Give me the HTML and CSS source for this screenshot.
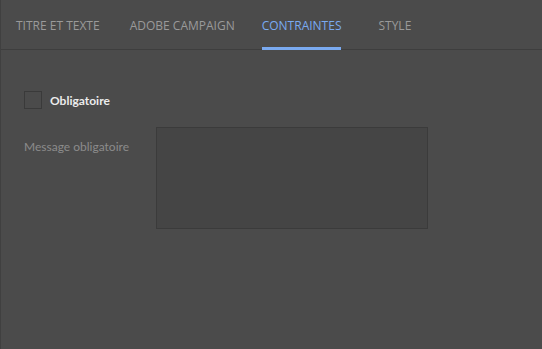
FILE: index.html
```html
<!DOCTYPE html>
<html lang="fr">
<head>
  <meta charset="UTF-8">
  <title>Contraintes</title>
  <link rel="stylesheet" href="styles.css">
</head>
<body>

<div class="panel">
  <div class="tabs">
    <div class="tab">TITRE ET TEXTE</div>
    <div class="tab">ADOBE CAMPAIGN</div>
    <div class="tab active">CONTRAINTES</div>
    <div class="tab">STYLE</div>
  </div>

  <!-- Contraintes -->
  <div class="content">
    <label class="check-row">
      <span class="checkbox"></span>
      <span class="check-label">Obligatoire</span>
    </label>

    <div class="field-row">
      <div class="field-label">Message obligatoire</div>
      <textarea class="field-input"></textarea>
    </div>
  </div>
</div>

</body>
</html>
```

FILE: styles.css
```css
html, body {
  margin: 0;
  height: 100%;
}

body {
  font-family: Lato, 'Open Sans', sans-serif;
  background: #4b4b4b;
}

.panel {
  height: 100%;
  border-left: 1px solid #404040;
  box-sizing: border-box;
}

.tabs {
  display: flex;
  height: 50px;
  padding-left: 15px;
  border-bottom: 1px solid #3e3e3e;
  box-sizing: border-box;
}

.tab {
  position: relative;
  font-family: 'Open Sans', sans-serif;
  font-size: 12px;
  color: #9a9a9a;
  line-height: 50px;
  padding-top: 1px;
  margin-right: 30px;
}

.tab.active {
  color: #7aaaf0;
}

.tab.active::after {
  content: '';
  position: absolute;
  left: 0;
  right: 0;
  bottom: -1px;
  height: 3px;
  background: #7aaaf0;
}

.tab:nth-child(2) { margin-right: 27px; }
.tab:nth-child(3) { margin-right: 37px; }

.content {
  padding: 41px 0 0 23px;
}

.check-row {
  display: flex;
  align-items: center;
  gap: 8px;
}

.checkbox {
  width: 16px;
  height: 16px;
  border: 1px solid #3a3a3a;
  background: #4b4b4b;
}

.check-label {
  font-size: 12px;
  font-weight: bold;
  color: #ececec;
}

.field-row {
  display: flex;
  margin-top: 18px;
}

.field-label {
  width: 132px;
  font-size: 12px;
  color: #8c8c8c;
  padding-top: 12px;
}

.field-input {
  width: 272px;
  height: 102px;
  box-sizing: border-box;
  background: #454545;
  border: 1px solid #3b3b3b;
  resize: none;
  margin: 0;
}
```
